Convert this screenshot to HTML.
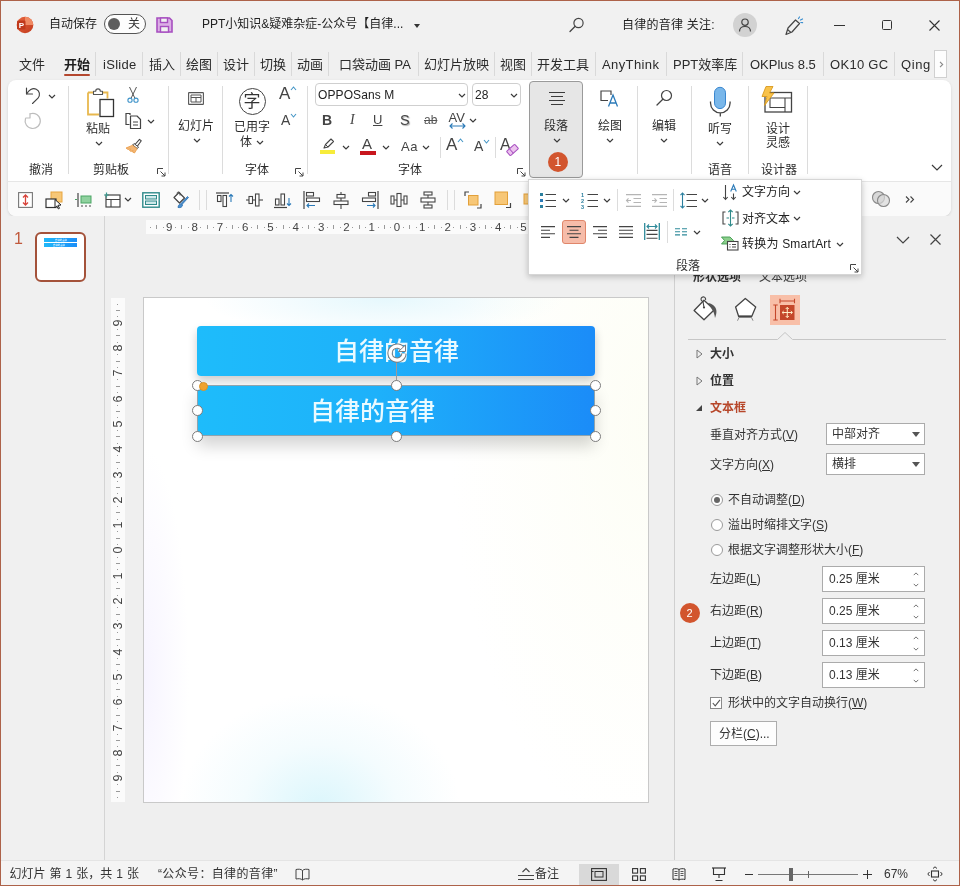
<!DOCTYPE html>
<html lang="zh-CN">
<head>
<meta charset="utf-8">
<title>PowerPoint</title>
<style>
*{box-sizing:border-box;margin:0;padding:0}
html,body{width:960px;height:886px;overflow:hidden}
body{font-family:"Liberation Sans","Noto Sans CJK SC",sans-serif;font-size:13px;color:#262626;background:#f0f0f0;position:relative}
.a{position:absolute}
.t{position:absolute;white-space:nowrap;line-height:1}
svg{position:absolute;overflow:visible}
#win{position:absolute;left:0;top:0;width:960px;height:886px;border:1px solid #ad6249;background:#f0f0f0}
/* title */
#title{left:1px;top:1px;width:958px;height:49px;background:#f1f1f1}
/* tabs */
.tab{font-size:13px;top:58px;color:#2b2b2b}
.tsep{position:absolute;top:52px;width:1px;height:24px;background:#d9d9d9}
/* ribbon */
#ribbon{left:8px;top:80px;width:943px;height:136px;background:#fff;border-radius:8px;box-shadow:0 1px 3px rgba(0,0,0,.12)}
.gsep{position:absolute;top:86px;width:1px;height:88px;background:#dcdcdc}
.glabel{font-size:13px;top:162px;color:#3a3a3a}
.rl{font-size:13px;color:#2b2b2b}
/* panes */
#leftpane{left:1px;top:216px;width:104px;height:644px;background:#f0f0f0;border-right:1px solid #d4d4d4}
#edit{left:105px;top:216px;width:570px;height:644px;background:#efefef}
#rightpane{left:674px;top:216px;width:285px;height:644px;background:#f0f0f0;border-left:1px solid #d0d0d0}
#status{left:1px;top:860px;width:958px;height:25px;background:#f4f4f4;border-top:1px solid #e4e4e4}
</style>
</head>
<body>
<div id="root" style="position:absolute;left:0;top:0;width:960px;height:886px;will-change:transform">
<div id="win"></div>
<div class="a" id="title"></div>
<div class="a" id="ribbon"><div class="a" style="left:0;top:101px;width:943px;height:35px;background:#fafafa;border-radius:0 0 8px 8px;border-top:1px solid #e6e6e6"></div></div>
<div class="a" id="leftpane"></div>
<div class="a" id="edit"></div>
<div class="a" id="rightpane"></div>
<div class="a" id="status"></div>
<!-- title bar -->
<svg style="left:16px;top:16px" width="18" height="18" viewBox="0 0 18 18"><defs><linearGradient id="pg" x1="0" y1="0" x2="1" y2="1"><stop offset="0" stop-color="#e8663f"/><stop offset="1" stop-color="#c23a1c"/></linearGradient></defs><circle cx="9" cy="9" r="8.3" fill="url(#pg)"/><path d="M9 .7A8.3 8.3 0 0 1 17.3 9H9z" fill="#f08a63"/><rect x="1" y="4.5" width="8.5" height="9" rx="1.2" fill="#c0391b"/><text x="5.3" y="12" font-size="8" font-weight="700" fill="#fff" text-anchor="middle" font-family="Liberation Sans, sans-serif">P</text></svg>
<div class="t" style="left:49px;top:18px;font-size:12px;color:#222">自动保存</div>
<div class="a" style="left:104px;top:14px;width:42px;height:20px;border:1px solid #555;border-radius:10px;background:#fdfdfd"></div>
<div class="a" style="left:108px;top:18px;width:12px;height:12px;border-radius:6px;background:#5e5e5e"></div>
<div class="t" style="left:128px;top:18px;font-size:12px;color:#333">关</div>
<svg style="left:156px;top:17px" width="17" height="16" viewBox="0 0 17 16"><path d="M1 1h12.5l2.5 2.5V15H1z" fill="#dcaee6" stroke="#a74fc0" stroke-width="1.6"/><rect x="4.5" y="1" width="7" height="4.5" fill="#f1f1f1" stroke="#a74fc0" stroke-width="1.4"/><rect x="4.5" y="9.5" width="8" height="5.5" fill="#f1f1f1" stroke="#a74fc0" stroke-width="1.4"/></svg>
<div class="t" style="left:202px;top:18px;font-size:12px;color:#222">PPT小知识&amp;疑难杂症-公众号【自律...</div>
<div class="a" style="left:414px;top:24px;width:0;height:0;border-left:3.5px solid transparent;border-right:3.5px solid transparent;border-top:4px solid #333"></div>
<svg style="left:569px;top:17px" width="16" height="16" viewBox="0 0 16 16"><circle cx="9.5" cy="6" r="4.6" fill="none" stroke="#444" stroke-width="1.2"/><path d="M6.2 9.3L1 14.5" stroke="#444" stroke-width="1.3" stroke-linecap="round"/></svg>
<div class="t" style="left:622px;top:19px;font-size:12px;color:#222;letter-spacing:.25px">自律的音律 关注:</div>
<div class="a" style="left:733px;top:13px;width:24px;height:24px;border-radius:12px;background:#d2d2d2"></div>
<svg style="left:737px;top:17px" width="16" height="16" viewBox="0 0 16 16"><circle cx="8" cy="5.2" r="3.2" fill="none" stroke="#444" stroke-width="1.2"/><path d="M2.5 14.5c0-3.2 2.4-5 5.5-5s5.500 1.800 5.500 5" fill="none" stroke="#444" stroke-width="1.200"/></svg>
<svg style="left:783px;top:15px" width="22" height="22" viewBox="0 0 22 22"><path d="M3 19.500l2-6.500 7.500-8 4 3.500-7.500 8.500z" fill="none" stroke="#444" stroke-width="1.200" stroke-linejoin="round"/><path d="M4.500 14.500l3.500 3" stroke="#444" stroke-width="1.100"/><path d="M15.500 3.500l1-1.500M17.500 5l2-1M17.800 7.500l1.800.2" stroke="#3a8ed0" stroke-width="1.200" stroke-linecap="round"/></svg>
<div class="a" style="left:834px;top:25px;width:11px;height:1px;background:#333"></div>
<div class="a" style="left:882px;top:20px;width:10px;height:10px;border:1px solid #333;border-radius:1.500px"></div>
<svg style="left:929px;top:20px" width="11" height="11" viewBox="0 0 11 11"><path d="M.5.5l10 10M10.500.5l-10 10" stroke="#333" stroke-width="1.100"/></svg>

<!-- tabs -->
<div class="t tab" style="left:19px">文件</div>
<div class="t tab" style="left:64px;font-weight:700;color:#1e1e1e">开始</div>
<div class="a" style="left:64px;top:74px;width:26px;height:2px;border-radius:1px;background:#b4472e"></div>
<div class="t tab" style="left:103px;letter-spacing:.3px">iSlide</div>
<div class="t tab" style="left:149px">插入</div>
<div class="t tab" style="left:186px">绘图</div>
<div class="t tab" style="left:223px">设计</div>
<div class="t tab" style="left:260px">切换</div>
<div class="t tab" style="left:297px">动画</div>
<div class="t tab" style="left:339px">口袋动画 PA</div>
<div class="t tab" style="left:424px">幻灯片放映</div>
<div class="t tab" style="left:500px">视图</div>
<div class="t tab" style="left:537px">开发工具</div>
<div class="t tab" style="left:602px;letter-spacing:.4px">AnyThink</div>
<div class="t tab" style="left:673px">PPT效率库</div>
<div class="t tab" style="left:750px">OKPlus 8.5</div>
<div class="t tab" style="left:830px;letter-spacing:.3px">OK10 GC</div>
<div class="t tab" style="left:901px;letter-spacing:.6px">Qing</div>
<div class="tsep" style="left:95px"></div><div class="tsep" style="left:142px"></div><div class="tsep" style="left:180px"></div><div class="tsep" style="left:217px"></div><div class="tsep" style="left:254px"></div><div class="tsep" style="left:291px"></div><div class="tsep" style="left:328px"></div><div class="tsep" style="left:418px"></div><div class="tsep" style="left:494px"></div><div class="tsep" style="left:531px"></div><div class="tsep" style="left:595px"></div><div class="tsep" style="left:666px"></div><div class="tsep" style="left:742px"></div><div class="tsep" style="left:823px"></div><div class="tsep" style="left:894px"></div>
<div class="a" style="left:934px;top:50px;width:13px;height:28px;background:#fdfdfd;border:1px solid #d0d0d0"></div>
<svg style="left:938.500px;top:60.500px" width="5" height="7" viewBox="0 0 5 7"><path d="M1 .8l2.700 2.700L1 6.200" fill="none" stroke="#888" stroke-width="1.100"/></svg>

<!-- ribbon group separators -->
<div class="gsep" style="left:68px"></div><div class="gsep" style="left:168px"></div><div class="gsep" style="left:222px"></div><div class="gsep" style="left:307px"></div><div class="gsep" style="left:637px"></div><div class="gsep" style="left:691px"></div><div class="gsep" style="left:748px"></div><div class="gsep" style="left:807px"></div>
<!-- undo group -->
<svg style="left:24px;top:85px" width="20" height="20" viewBox="0 0 20 20"><path d="M2.500 3v6h6" fill="none" stroke="#444" stroke-width="1.150" stroke-linecap="round" stroke-linejoin="round"/><path d="M2.800 8.800C4.500 5 8.500 2.500 12.300 4.200c3.400 1.600 4.200 5.800 1.700 9L8.500 18.500" fill="none" stroke="#444" stroke-width="1.150" stroke-linecap="round"/></svg>
<svg class="chev" style="left:48px;top:94px" width="8" height="5" viewBox="0 0 8 5"><path d="M1 1l3 3 3-3" fill="none" stroke="#3b3b3b" stroke-width="1.200"/></svg>
<svg style="left:24px;top:112px" width="18" height="18" viewBox="0 0 18 18"><path d="M6 1.500v4.500H1.800" fill="none" stroke="#bdbdbd" stroke-width="1.200" stroke-linecap="round" stroke-linejoin="round"/><path d="M6.300 1.700A7.600 7.600 0 1 1 1.500 6.500" fill="none" stroke="#bdbdbd" stroke-width="1.200" stroke-linecap="round"/></svg>
<div class="t rl" style="left:29px;top:163.500px;font-size:12px">撤消</div>
<!-- clipboard group -->
<svg style="left:86px;top:87px" width="30" height="32" viewBox="0 0 30 32"><path d="M2 5.500h5.500M17 5.500h4.500v6M2 5.500V27.500h11" fill="none" stroke="#e8b84e" stroke-width="1.800"/><path d="M7.500 7.500V4.200h2.200a2.300 2.300 0 0 1 4.600 0h2.200v3.300z" fill="#fff" stroke="#555" stroke-width="1.100" stroke-linejoin="round"/><rect x="14" y="12.500" width="13.500" height="17" fill="#fff" stroke="#333" stroke-width="1.300"/></svg>
<div class="t rl" style="left:86px;top:123px;font-size:12px">粘贴</div>
<svg style="left:95px;top:141px" width="8" height="5" viewBox="0 0 8 5"><path d="M1 1l3 3 3-3" fill="none" stroke="#3b3b3b" stroke-width="1.200"/></svg>
<svg style="left:126px;top:86px" width="14" height="18" viewBox="0 0 14 18"><path d="M3.500 1l5.300 11M10.500 1L5.200 12" stroke="#555" stroke-width="1" fill="none"/><circle cx="4" cy="14.200" r="2.100" fill="none" stroke="#3e93c9" stroke-width="1.100"/><circle cx="10" cy="14.200" r="2.100" fill="none" stroke="#3e93c9" stroke-width="1.100"/></svg>
<svg style="left:125px;top:112px" width="18" height="18" viewBox="0 0 18 18"><path d="M5 3V1.500H1v11h3.500" fill="none" stroke="#444" stroke-width="1.200"/><path d="M5.500 4h6.500l3.500 3.500V16.500h-10z" fill="#fff" stroke="#444" stroke-width="1.200" stroke-linejoin="round"/><path d="M8 10h5M8 13h5" stroke="#444" stroke-width="1.100"/></svg>
<svg style="left:147px;top:119px" width="8" height="5" viewBox="0 0 8 5"><path d="M1 1l3 3 3-3" fill="none" stroke="#3b3b3b" stroke-width="1.200"/></svg>
<svg style="left:125px;top:138px" width="18" height="16" viewBox="0 0 18 16"><path d="M10 6.500l4.500-5.200 1.800 1.500-4 5.500" fill="#fff" stroke="#444" stroke-width="1.100" stroke-linejoin="round"/><path d="M9 5.500l4.500 3.500-1.200 1.600L7.700 7z" fill="#fff" stroke="#444" stroke-width="1"/><path d="M7.500 7.300l4.600 3.500-2.600 4.200-2-1 .5-1.500-2 1-1.500-1 1-1.500-2.500.5L1 10z" fill="#f3b675" stroke="#e89a45" stroke-width=".8" stroke-linejoin="round"/></svg>
<div class="t rl" style="left:93px;top:163.500px;font-size:12px">剪贴板</div>
<svg class="lnch" style="left:157px;top:168px" width="9" height="9" viewBox="0 0 9 9"><path d="M.5 6V.5H6M3.500 3.500L8 8M8 4.500V8H4.500" fill="none" stroke="#444" stroke-width="1"/></svg>
<!-- slides group -->
<svg style="left:188px;top:92px" width="16" height="13" viewBox="0 0 16 13"><rect x=".6" y=".6" width="14.800" height="11.800" rx=".5" fill="none" stroke="#555" stroke-width="1.100"/><path d="M3 3h10v7H3zM3 5.500h10M8 5.500v4.500" fill="none" stroke="#555" stroke-width="1"/></svg>
<div class="t rl" style="left:178px;top:120px;font-size:12px">幻灯片</div>
<svg style="left:193px;top:138px" width="8" height="5" viewBox="0 0 8 5"><path d="M1 1l3 3 3-3" fill="none" stroke="#3b3b3b" stroke-width="1.200"/></svg>
<!-- font group 1 -->
<div class="a" style="left:238.500px;top:88px;width:27px;height:27px;border:1.200px solid #444;border-radius:14px"></div>
<div class="t" style="left:243.500px;top:93px;font-size:17px;color:#333">字</div>
<div class="t rl" style="left:234px;top:121px;font-size:12px">已用字</div>
<div class="t rl" style="left:240px;top:136px;font-size:12px">体</div>
<svg style="left:256px;top:140px" width="8" height="5" viewBox="0 0 8 5"><path d="M1 1l3 3 3-3" fill="none" stroke="#3b3b3b" stroke-width="1.200"/></svg>
<div class="t" style="left:279px;top:85px;font-size:17px;color:#444">A</div>
<svg style="left:290px;top:86px" width="7" height="5" viewBox="0 0 7 5"><path d="M1 4l2.500-3L6 4" fill="none" stroke="#4596c6" stroke-width="1.100"/></svg>
<div class="t" style="left:281px;top:113px;font-size:14px;color:#444">A</div>
<svg style="left:290px;top:113px" width="7" height="5" viewBox="0 0 7 5"><path d="M1 1l2.500 3L6 1" fill="none" stroke="#4596c6" stroke-width="1.100"/></svg>
<div class="t rl" style="left:245px;top:163.500px;font-size:12px">字体</div>
<svg style="left:295px;top:168px" width="9" height="9" viewBox="0 0 9 9"><path d="M.5 6V.5H6M3.500 3.500L8 8M8 4.500V8H4.500" fill="none" stroke="#444" stroke-width="1"/></svg>
<!-- font group 2 -->
<div class="a" style="left:315px;top:83px;width:153px;height:23px;border:1px solid #cfcfcf;border-radius:4px;background:#fff"></div>
<div class="t" style="left:318px;top:89px;font-size:12px;color:#222;letter-spacing:.1px">OPPOSans M</div>
<svg style="left:458px;top:93px" width="8" height="5" viewBox="0 0 8 5"><path d="M1 1l3 3 3-3" fill="none" stroke="#3b3b3b" stroke-width="1.200"/></svg>
<div class="a" style="left:472px;top:83px;width:49px;height:23px;border:1px solid #cfcfcf;border-radius:4px;background:#fff"></div>
<div class="t" style="left:475px;top:89px;font-size:12px;color:#222">28</div>
<svg style="left:510px;top:93px" width="8" height="5" viewBox="0 0 8 5"><path d="M1 1l3 3 3-3" fill="none" stroke="#3b3b3b" stroke-width="1.200"/></svg>
<div class="t" style="left:322px;top:113px;font-size:14px;font-weight:700;color:#444">B</div>
<div class="t" style="left:350px;top:113px;font-size:14px;font-style:italic;color:#444;font-family:'Liberation Serif',serif">I</div>
<div class="t" style="left:373px;top:113px;font-size:13px;color:#444;text-decoration:underline">U</div>
<div class="t" style="left:400px;top:113px;font-size:14.500px;color:#444;text-shadow:1px 1px 1px #aaa">S</div>
<div class="t" style="left:424px;top:114px;font-size:12px;color:#555;text-decoration:line-through">ab</div>
<div class="t" style="left:448.500px;top:110.500px;font-size:13px;color:#444">AV</div>
<svg style="left:449px;top:123px" width="17" height="6" viewBox="0 0 17 6"><path d="M1 3h15M3.500.5L1 3l2.500 2.500M13.500.5L16 3l-2.500 2.500" fill="none" stroke="#2b7ab8" stroke-width="1.100"/></svg>
<svg style="left:469px;top:118px" width="8" height="5" viewBox="0 0 8 5"><path d="M1 1l3 3 3-3" fill="none" stroke="#3b3b3b" stroke-width="1.200"/></svg>
<!-- row3 -->
<svg style="left:319px;top:137px" width="18" height="18" viewBox="0 0 18 18"><rect x="1" y="13" width="15" height="4" fill="#f7ec3a"/><path d="M5 11l1.500-3.500L12 2l2.500 2.500L9 10z" fill="#fff" stroke="#444" stroke-width="1.100" stroke-linejoin="round"/><path d="M6.500 7.500L9 10" stroke="#444" stroke-width="1"/></svg>
<svg style="left:342px;top:145px" width="8" height="5" viewBox="0 0 8 5"><path d="M1 1l3 3 3-3" fill="none" stroke="#3b3b3b" stroke-width="1.200"/></svg>
<div class="t" style="left:362px;top:136px;font-size:15px;color:#444">A</div>
<div class="a" style="left:360px;top:151px;width:16px;height:4px;background:#c8161d"></div>
<svg style="left:382px;top:145px" width="8" height="5" viewBox="0 0 8 5"><path d="M1 1l3 3 3-3" fill="none" stroke="#3b3b3b" stroke-width="1.200"/></svg>
<div class="t" style="left:401px;top:140px;font-size:13px;color:#444;letter-spacing:.5px">Aa</div>
<svg style="left:422px;top:145px" width="8" height="5" viewBox="0 0 8 5"><path d="M1 1l3 3 3-3" fill="none" stroke="#3b3b3b" stroke-width="1.200"/></svg>
<div class="a" style="left:440px;top:137px;width:1px;height:21px;background:#dcdcdc"></div>
<div class="t" style="left:446px;top:136px;font-size:17px;color:#444">A</div>
<svg style="left:457px;top:138px" width="7" height="5" viewBox="0 0 7 5"><path d="M1 4l2.500-3L6 4" fill="none" stroke="#4596c6" stroke-width="1.100"/></svg>
<div class="t" style="left:474px;top:139px;font-size:14px;color:#444">A</div>
<svg style="left:483px;top:139px" width="7" height="5" viewBox="0 0 7 5"><path d="M1 1l2.500 3L6 1" fill="none" stroke="#4596c6" stroke-width="1.100"/></svg>
<div class="a" style="left:495px;top:137px;width:1px;height:21px;background:#dcdcdc"></div>
<div class="t" style="left:500px;top:137px;font-size:16px;color:#444">A</div>
<svg style="left:506px;top:144px" width="13" height="12" viewBox="0 0 13 12"><g transform="rotate(-42 6.500 6)"><rect x="1" y="3" width="11" height="6" rx="1" fill="#ecc3ee" stroke="#a74fc0" stroke-width="1"/><path d="M5 3v6" stroke="#a74fc0" stroke-width="1"/></g></svg>
<div class="t rl" style="left:398px;top:163.500px;font-size:12px">字体</div>
<svg style="left:517px;top:168px" width="9" height="9" viewBox="0 0 9 9"><path d="M.5 6V.5H6M3.500 3.500L8 8M8 4.500V8H4.500" fill="none" stroke="#444" stroke-width="1"/></svg>
<!-- paragraph button -->
<div class="a" style="left:529px;top:81px;width:54px;height:97px;border:1px solid #9a9a9a;border-radius:4px;background:#e6e6e6"></div>
<svg style="left:549px;top:92px" width="16" height="13" viewBox="0 0 16 13"><path d="M0 .5h16M2 4.500h12M0 8.500h16M2 12.500h12" stroke="#3c3c3c" stroke-width="1"/></svg>
<div class="t rl" style="left:544px;top:120px;font-size:12px">段落</div>
<svg style="left:553px;top:138px" width="8" height="5" viewBox="0 0 8 5"><path d="M1 1l3 3 3-3" fill="none" stroke="#3b3b3b" stroke-width="1.200"/></svg>
<div class="a" style="left:548px;top:152px;width:20px;height:20px;border-radius:10px;background:#d2552e"></div>
<div class="t" style="left:554.500px;top:156px;font-size:12px;color:#fff">1</div>
<!-- drawing -->
<svg style="left:600px;top:90px" width="20" height="18" viewBox="0 0 20 18"><path d="M8 10.500H1V1h10v4" fill="none" stroke="#444" stroke-width="1.200"/><path d="M8.500 16.500L13 5l4.500 11.500M10 13h6" fill="none" stroke="#2b7ab8" stroke-width="1.300"/></svg>
<div class="t rl" style="left:598px;top:120px;font-size:12px">绘图</div>
<svg style="left:606px;top:138px" width="8" height="5" viewBox="0 0 8 5"><path d="M1 1l3 3 3-3" fill="none" stroke="#3b3b3b" stroke-width="1.200"/></svg>
<!-- editing -->
<svg style="left:656px;top:89px" width="17" height="17" viewBox="0 0 17 17"><circle cx="10.500" cy="6.500" r="5" fill="none" stroke="#444" stroke-width="1.200"/><path d="M6.800 10.200L1 16" stroke="#444" stroke-width="1.300" stroke-linecap="round"/></svg>
<div class="t rl" style="left:652px;top:120px;font-size:12px">编辑</div>
<svg style="left:660px;top:138px" width="8" height="5" viewBox="0 0 8 5"><path d="M1 1l3 3 3-3" fill="none" stroke="#3b3b3b" stroke-width="1.200"/></svg>
<!-- dictate -->
<svg style="left:709px;top:86px" width="23" height="32" viewBox="0 0 23 32"><rect x="5.500" y="1.300" width="11" height="21.300" rx="5.500" fill="#79b7ea" stroke="#3a87cf" stroke-width="1"/><path d="M1.500 15.500v1.500a9.800 9.800 0 0 0 19.600 0v-1.500M11.300 27v3.500" fill="none" stroke="#444" stroke-width="1.300"/></svg>
<div class="t rl" style="left:708px;top:123px;font-size:12px">听写</div>
<svg style="left:716px;top:141px" width="8" height="5" viewBox="0 0 8 5"><path d="M1 1l3 3 3-3" fill="none" stroke="#3b3b3b" stroke-width="1.200"/></svg>
<div class="t rl" style="left:708px;top:163.500px;font-size:12px">语音</div>
<!-- designer -->
<svg style="left:760px;top:85px" width="33" height="29" viewBox="0 0 33 29"><rect x="5" y="7.500" width="26.500" height="19.500" fill="#fff" stroke="#444" stroke-width="1.300"/><path d="M10 13h21M25 13v14M10 13v9.500h15" fill="none" stroke="#444" stroke-width="1.100"/><path d="M6 1.500h7l-3.500 6.500h4.500L4.500 20.500 7 11.500H2z" fill="#f8c24a" stroke="#d99a1e" stroke-width=".9" stroke-linejoin="round"/></svg>
<div class="t rl" style="left:766px;top:123px;font-size:12px">设计</div>
<div class="t rl" style="left:766px;top:137px;font-size:12px">灵感</div>
<div class="t rl" style="left:761px;top:163.500px;font-size:12px">设计器</div>
<svg style="left:931px;top:164px" width="12" height="7" viewBox="0 0 12 7"><path d="M1 1l5 5 5-5" fill="none" stroke="#3b3b3b" stroke-width="1.200"/></svg>

<!-- quick toolbar row -->
<svg style="left:18px;top:192px" width="15" height="16" viewBox="0 0 15 16"><rect x=".6" y=".6" width="13.800" height="14.800" fill="#fff" stroke="#777" stroke-width="1.100"/><path d="M7.500 3v10M5 5.500L7.500 3 10 5.500M5 10.500L7.500 13 10 10.500" fill="none" stroke="#d8433a" stroke-width="1.300"/></svg>
<svg style="left:45px;top:191px" width="18" height="18" viewBox="0 0 18 18"><rect x="6" y="1" width="11" height="10" fill="#f7c777" stroke="#e7a540" stroke-width="1"/><rect x="1" y="8" width="10" height="8.500" fill="#fff" stroke="#333" stroke-width="1.200"/><path d="M10 8.500l6 5.500-3 .3 1.500 3-1.200.6-1.500-3-1.800 2z" fill="#fff" stroke="#222" stroke-width="1" stroke-linejoin="round"/></svg>
<svg style="left:74px;top:192px" width="19" height="16" viewBox="0 0 19 16"><rect x="7" y="4" width="10" height="7" fill="#8fd19e" stroke="#4aa564" stroke-width="1"/><path d="M4 1v14" stroke="#444" stroke-width="1.200"/><path d="M1 7.500h2" stroke="#4aa564" stroke-width="1.200"/><path d="M7 14h2M11 14h2M15 14h2" stroke="#444" stroke-width="1.200"/></svg>
<svg style="left:103px;top:192px" width="18" height="16" viewBox="0 0 18 16"><rect x="3" y="3" width="14" height="12" fill="#fff" stroke="#444" stroke-width="1.200"/><path d="M3 7.500h14M8 7.500V15" stroke="#444" stroke-width="1.100"/><path d="M1 3h5M3.500.5v5" stroke="#3a9a8f" stroke-width="1.200"/></svg>
<svg style="left:124px;top:197px" width="8" height="5" viewBox="0 0 8 5"><path d="M1 1l3 3 3-3" fill="none" stroke="#3b3b3b" stroke-width="1.200"/></svg>
<svg style="left:142px;top:192px" width="18" height="16" viewBox="0 0 18 16"><rect x=".8" y=".8" width="16.400" height="14.400" fill="#fff" stroke="#2f8a8a" stroke-width="1.400"/><rect x="3.500" y="3.500" width="11" height="3.500" fill="#cfe9ea" stroke="#2f8a8a" stroke-width="1"/><rect x="3.500" y="9" width="11" height="3.500" fill="#cfe9ea" stroke="#2f8a8a" stroke-width="1"/></svg>
<svg style="left:172px;top:191px" width="18" height="18" viewBox="0 0 18 18"><path d="M2 6.500L7 1.500l5.500 5.500-5 5z" fill="#fff" stroke="#444" stroke-width="1.200" stroke-linejoin="round"/><path d="M5 2.500c0-2 3-2 3 0v2" fill="none" stroke="#444" stroke-width="1"/><path d="M16.500 6.500L10 13.500l-1-1 6.500-7z" fill="#4a90d0" stroke="#2b6fb0" stroke-width=".8"/><path d="M9.500 13c-1.500-.5-3.500 1-3.500 3.500 2.500.5 4.500-.5 4.500-2.500z" fill="#4a90d0" stroke="#2b6fb0" stroke-width=".8"/></svg>
<div class="a" style="left:199px;top:190px;width:1px;height:20px;background:#dcdcdc"></div>
<div class="a" style="left:206px;top:190px;width:1px;height:20px;background:#dcdcdc"></div>
<svg style="left:216px;top:192px" width="18" height="16" viewBox="0 0 18 16"><path d="M0 1h13" stroke="#444" stroke-width="1.200"/><rect x="1.500" y="3.500" width="3.500" height="6" fill="#fff" stroke="#444" stroke-width="1.100"/><rect x="7" y="3.500" width="3.500" height="11" fill="#fff" stroke="#444" stroke-width="1.100"/><path d="M15 10V2.500M13 4.500l2-2 2 2" fill="none" stroke="#2b7ab8" stroke-width="1.100"/></svg>
<svg style="left:246px;top:192px" width="17" height="16" viewBox="0 0 17 16"><path d="M0 8h17" stroke="#444" stroke-width="1.100"/><rect x="3" y="4.500" width="3.500" height="7" fill="#fff" stroke="#444" stroke-width="1.100"/><rect x="9.500" y="2" width="3.500" height="12" fill="#fff" stroke="#444" stroke-width="1.100"/></svg>
<svg style="left:274px;top:192px" width="18" height="17" viewBox="0 0 18 17"><path d="M0 15.500h13" stroke="#444" stroke-width="1.200"/><rect x="1.500" y="7" width="3.500" height="6" fill="#fff" stroke="#444" stroke-width="1.100"/><rect x="7" y="2" width="3.500" height="11" fill="#fff" stroke="#444" stroke-width="1.100"/><path d="M15 6v7.500M13 11.500l2 2 2-2" fill="none" stroke="#2b7ab8" stroke-width="1.100"/></svg>
<svg style="left:303px;top:191px" width="18" height="18" viewBox="0 0 18 18"><path d="M1 0v18" stroke="#444" stroke-width="1.200"/><rect x="3.500" y="1.500" width="7" height="3.500" fill="#fff" stroke="#444" stroke-width="1.100"/><rect x="3.500" y="7" width="13" height="3.500" fill="#fff" stroke="#444" stroke-width="1.100"/><path d="M12 14.500H4M6 12.500l-2 2 2 2" fill="none" stroke="#2b7ab8" stroke-width="1.100"/></svg>
<svg style="left:333px;top:192px" width="16" height="17" viewBox="0 0 16 17"><path d="M8 0v17" stroke="#444" stroke-width="1.100"/><rect x="4" y="2.500" width="8" height="3.500" fill="#fff" stroke="#444" stroke-width="1.100"/><rect x="1" y="9" width="14" height="3.500" fill="#fff" stroke="#444" stroke-width="1.100"/></svg>
<svg style="left:361px;top:191px" width="18" height="18" viewBox="0 0 18 18"><path d="M17 0v18" stroke="#444" stroke-width="1.200"/><rect x="7.500" y="1.500" width="7" height="3.500" fill="#fff" stroke="#444" stroke-width="1.100"/><rect x="1.500" y="7" width="13" height="3.500" fill="#fff" stroke="#444" stroke-width="1.100"/><path d="M6 14.500h8M12 12.500l2 2-2 2" fill="none" stroke="#2b7ab8" stroke-width="1.100"/></svg>
<svg style="left:390px;top:192px" width="18" height="16" viewBox="0 0 18 16"><rect x="1" y="4" width="3" height="8" fill="#fff" stroke="#444" stroke-width="1.100"/><rect x="7" y="1.500" width="4" height="13" fill="#fff" stroke="#444" stroke-width="1.100"/><rect x="14" y="4" width="3" height="8" fill="#fff" stroke="#444" stroke-width="1.100"/><path d="M4 8h3M11 8h3" stroke="#444" stroke-width="1"/></svg>
<svg style="left:420px;top:191px" width="16" height="18" viewBox="0 0 16 18"><rect x="4" y="1" width="8" height="3" fill="#fff" stroke="#444" stroke-width="1.100"/><rect x="1" y="7" width="14" height="4" fill="#fff" stroke="#444" stroke-width="1.100"/><rect x="4" y="14" width="8" height="3" fill="#fff" stroke="#444" stroke-width="1.100"/><path d="M8 4v3M8 11v3" stroke="#444" stroke-width="1"/></svg>
<div class="a" style="left:447px;top:190px;width:1px;height:20px;background:#dcdcdc"></div>
<div class="a" style="left:454px;top:190px;width:1px;height:20px;background:#dcdcdc"></div>
<svg style="left:464px;top:191px" width="18" height="18" viewBox="0 0 18 18"><path d="M5 1H1v4M13 17h4v-4" fill="none" stroke="#444" stroke-width="1.200"/><rect x="4.500" y="4.500" width="9.500" height="9.500" fill="#f7c777" stroke="#e2a03a" stroke-width="1"/></svg>
<svg style="left:494px;top:191px" width="18" height="18" viewBox="0 0 18 18"><path d="M12 16.500h4.500V12" fill="none" stroke="#444" stroke-width="1.200"/><rect x="1" y="1" width="12.500" height="12.500" fill="#f7c777" stroke="#e2a03a" stroke-width="1"/></svg>
<svg style="left:523px;top:191px" width="8" height="18" viewBox="0 0 8 18"><rect x="1" y="3" width="10" height="10" fill="#f7c777" stroke="#e2a03a" stroke-width="1"/></svg>
<svg style="left:871px;top:190px" width="20" height="18" viewBox="0 0 20 18"><circle cx="7.500" cy="7.500" r="6" fill="#d8d8d8" stroke="#888" stroke-width="1.100"/><circle cx="12.500" cy="10.500" r="6" fill="#d8d8d8" fill-opacity=".7" stroke="#888" stroke-width="1.100"/></svg>
<svg style="left:905px;top:196px" width="10" height="7" viewBox="0 0 10 7"><path d="M1 .5l3 3-3 3M5.500.5l3 3-3 3" fill="none" stroke="#444" stroke-width="1.100"/></svg>


<div class="t" style="left:14px;top:231px;font-size:16px;color:#c0593c">1</div>
<div class="a" style="left:35px;top:232px;width:51px;height:50px;border:2.500px solid #a4523a;border-radius:6px;background:#fff;overflow:hidden"><div class="a" style="left:6.500px;top:3.500px;width:33.500px;height:4.600px;background:linear-gradient(90deg,#1fb8f9,#1b8ef8)"></div><div class="a" style="left:6.500px;top:8.500px;width:33.500px;height:4.600px;background:linear-gradient(90deg,#1fb8f9,#1b8ef8)"></div><div class="t" style="left:18px;top:4.500px;font-size:12px;color:#fff;transform:scale(.2);transform-origin:0 0">自律的音律</div><div class="t" style="left:16px;top:9.500px;font-size:12px;color:#fff;transform:scale(.2);transform-origin:0 0">自律的音律</div></div>
<div class="a" style="left:146px;top:220px;width:503px;height:14px;background:#fbfbfb"></div>
<div class="t" style="left:164.3px;top:221.500px;width:10px;text-align:center;font-size:11.500px;color:#444">9</div>
<div class="t" style="left:189.6px;top:221.500px;width:10px;text-align:center;font-size:11.500px;color:#444">8</div>
<div class="t" style="left:214.9px;top:221.500px;width:10px;text-align:center;font-size:11.500px;color:#444">7</div>
<div class="t" style="left:240.2px;top:221.500px;width:10px;text-align:center;font-size:11.500px;color:#444">6</div>
<div class="t" style="left:265.5px;top:221.500px;width:10px;text-align:center;font-size:11.500px;color:#444">5</div>
<div class="t" style="left:290.8px;top:221.500px;width:10px;text-align:center;font-size:11.500px;color:#444">4</div>
<div class="t" style="left:316.1px;top:221.500px;width:10px;text-align:center;font-size:11.500px;color:#444">3</div>
<div class="t" style="left:341.4px;top:221.500px;width:10px;text-align:center;font-size:11.500px;color:#444">2</div>
<div class="t" style="left:366.7px;top:221.500px;width:10px;text-align:center;font-size:11.500px;color:#444">1</div>
<div class="t" style="left:392.0px;top:221.500px;width:10px;text-align:center;font-size:11.500px;color:#444">0</div>
<div class="t" style="left:417.3px;top:221.500px;width:10px;text-align:center;font-size:11.500px;color:#444">1</div>
<div class="t" style="left:442.6px;top:221.500px;width:10px;text-align:center;font-size:11.500px;color:#444">2</div>
<div class="t" style="left:467.9px;top:221.500px;width:10px;text-align:center;font-size:11.500px;color:#444">3</div>
<div class="t" style="left:493.2px;top:221.500px;width:10px;text-align:center;font-size:11.500px;color:#444">4</div>
<div class="t" style="left:518.5px;top:221.500px;width:10px;text-align:center;font-size:11.500px;color:#444">5</div>
<div class="a" style="left:149.8px;top:226.500px;width:1px;height:1px;background:#9a9a9a"></div>
<div class="a" style="left:156.2px;top:225px;width:1px;height:4px;background:#9a9a9a"></div>
<div class="a" style="left:162.5px;top:226.500px;width:1px;height:1px;background:#9a9a9a"></div>
<div class="a" style="left:175.1px;top:226.500px;width:1px;height:1px;background:#9a9a9a"></div>
<div class="a" style="left:181.4px;top:225px;width:1px;height:4px;background:#9a9a9a"></div>
<div class="a" style="left:187.8px;top:226.500px;width:1px;height:1px;background:#9a9a9a"></div>
<div class="a" style="left:200.4px;top:226.500px;width:1px;height:1px;background:#9a9a9a"></div>
<div class="a" style="left:206.8px;top:225px;width:1px;height:4px;background:#9a9a9a"></div>
<div class="a" style="left:213.1px;top:226.500px;width:1px;height:1px;background:#9a9a9a"></div>
<div class="a" style="left:225.7px;top:226.500px;width:1px;height:1px;background:#9a9a9a"></div>
<div class="a" style="left:232.0px;top:225px;width:1px;height:4px;background:#9a9a9a"></div>
<div class="a" style="left:238.4px;top:226.500px;width:1px;height:1px;background:#9a9a9a"></div>
<div class="a" style="left:251.0px;top:226.500px;width:1px;height:1px;background:#9a9a9a"></div>
<div class="a" style="left:257.4px;top:225px;width:1px;height:4px;background:#9a9a9a"></div>
<div class="a" style="left:263.7px;top:226.500px;width:1px;height:1px;background:#9a9a9a"></div>
<div class="a" style="left:276.3px;top:226.500px;width:1px;height:1px;background:#9a9a9a"></div>
<div class="a" style="left:282.6px;top:225px;width:1px;height:4px;background:#9a9a9a"></div>
<div class="a" style="left:289.0px;top:226.500px;width:1px;height:1px;background:#9a9a9a"></div>
<div class="a" style="left:301.6px;top:226.500px;width:1px;height:1px;background:#9a9a9a"></div>
<div class="a" style="left:307.9px;top:225px;width:1px;height:4px;background:#9a9a9a"></div>
<div class="a" style="left:314.3px;top:226.500px;width:1px;height:1px;background:#9a9a9a"></div>
<div class="a" style="left:326.9px;top:226.500px;width:1px;height:1px;background:#9a9a9a"></div>
<div class="a" style="left:333.2px;top:225px;width:1px;height:4px;background:#9a9a9a"></div>
<div class="a" style="left:339.6px;top:226.500px;width:1px;height:1px;background:#9a9a9a"></div>
<div class="a" style="left:352.2px;top:226.500px;width:1px;height:1px;background:#9a9a9a"></div>
<div class="a" style="left:358.6px;top:225px;width:1px;height:4px;background:#9a9a9a"></div>
<div class="a" style="left:364.9px;top:226.500px;width:1px;height:1px;background:#9a9a9a"></div>
<div class="a" style="left:377.5px;top:226.500px;width:1px;height:1px;background:#9a9a9a"></div>
<div class="a" style="left:383.9px;top:225px;width:1px;height:4px;background:#9a9a9a"></div>
<div class="a" style="left:390.2px;top:226.500px;width:1px;height:1px;background:#9a9a9a"></div>
<div class="a" style="left:402.8px;top:226.500px;width:1px;height:1px;background:#9a9a9a"></div>
<div class="a" style="left:409.1px;top:225px;width:1px;height:4px;background:#9a9a9a"></div>
<div class="a" style="left:415.5px;top:226.500px;width:1px;height:1px;background:#9a9a9a"></div>
<div class="a" style="left:428.1px;top:226.500px;width:1px;height:1px;background:#9a9a9a"></div>
<div class="a" style="left:434.4px;top:225px;width:1px;height:4px;background:#9a9a9a"></div>
<div class="a" style="left:440.8px;top:226.500px;width:1px;height:1px;background:#9a9a9a"></div>
<div class="a" style="left:453.4px;top:226.500px;width:1px;height:1px;background:#9a9a9a"></div>
<div class="a" style="left:459.8px;top:225px;width:1px;height:4px;background:#9a9a9a"></div>
<div class="a" style="left:466.1px;top:226.500px;width:1px;height:1px;background:#9a9a9a"></div>
<div class="a" style="left:478.7px;top:226.500px;width:1px;height:1px;background:#9a9a9a"></div>
<div class="a" style="left:485.1px;top:225px;width:1px;height:4px;background:#9a9a9a"></div>
<div class="a" style="left:491.4px;top:226.500px;width:1px;height:1px;background:#9a9a9a"></div>
<div class="a" style="left:504.0px;top:226.500px;width:1px;height:1px;background:#9a9a9a"></div>
<div class="a" style="left:510.4px;top:225px;width:1px;height:4px;background:#9a9a9a"></div>
<div class="a" style="left:516.7px;top:226.500px;width:1px;height:1px;background:#9a9a9a"></div>
<div class="a" style="left:529.3px;top:226.500px;width:1px;height:1px;background:#9a9a9a"></div>
<div class="a" style="left:111px;top:298px;width:14px;height:504px;background:#fbfbfb"></div>
<div class="t" style="left:112px;top:317.7px;width:10px;height:10px;text-align:center;font-size:12.500px;color:#444;transform:rotate(-90deg)">9</div>
<div class="t" style="left:112px;top:343.0px;width:10px;height:10px;text-align:center;font-size:12.500px;color:#444;transform:rotate(-90deg)">8</div>
<div class="t" style="left:112px;top:368.3px;width:10px;height:10px;text-align:center;font-size:12.500px;color:#444;transform:rotate(-90deg)">7</div>
<div class="t" style="left:112px;top:393.6px;width:10px;height:10px;text-align:center;font-size:12.500px;color:#444;transform:rotate(-90deg)">6</div>
<div class="t" style="left:112px;top:418.9px;width:10px;height:10px;text-align:center;font-size:12.500px;color:#444;transform:rotate(-90deg)">5</div>
<div class="t" style="left:112px;top:444.2px;width:10px;height:10px;text-align:center;font-size:12.500px;color:#444;transform:rotate(-90deg)">4</div>
<div class="t" style="left:112px;top:469.5px;width:10px;height:10px;text-align:center;font-size:12.500px;color:#444;transform:rotate(-90deg)">3</div>
<div class="t" style="left:112px;top:494.8px;width:10px;height:10px;text-align:center;font-size:12.500px;color:#444;transform:rotate(-90deg)">2</div>
<div class="t" style="left:112px;top:520.1px;width:10px;height:10px;text-align:center;font-size:12.500px;color:#444;transform:rotate(-90deg)">1</div>
<div class="t" style="left:112px;top:545.4px;width:10px;height:10px;text-align:center;font-size:12.500px;color:#444;transform:rotate(-90deg)">0</div>
<div class="t" style="left:112px;top:570.7px;width:10px;height:10px;text-align:center;font-size:12.500px;color:#444;transform:rotate(-90deg)">1</div>
<div class="t" style="left:112px;top:596.0px;width:10px;height:10px;text-align:center;font-size:12.500px;color:#444;transform:rotate(-90deg)">2</div>
<div class="t" style="left:112px;top:621.3px;width:10px;height:10px;text-align:center;font-size:12.500px;color:#444;transform:rotate(-90deg)">3</div>
<div class="t" style="left:112px;top:646.6px;width:10px;height:10px;text-align:center;font-size:12.500px;color:#444;transform:rotate(-90deg)">4</div>
<div class="t" style="left:112px;top:671.9px;width:10px;height:10px;text-align:center;font-size:12.500px;color:#444;transform:rotate(-90deg)">5</div>
<div class="t" style="left:112px;top:697.2px;width:10px;height:10px;text-align:center;font-size:12.500px;color:#444;transform:rotate(-90deg)">6</div>
<div class="t" style="left:112px;top:722.5px;width:10px;height:10px;text-align:center;font-size:12.500px;color:#444;transform:rotate(-90deg)">7</div>
<div class="t" style="left:112px;top:747.8px;width:10px;height:10px;text-align:center;font-size:12.500px;color:#444;transform:rotate(-90deg)">8</div>
<div class="t" style="left:112px;top:773.1px;width:10px;height:10px;text-align:center;font-size:12.500px;color:#444;transform:rotate(-90deg)">9</div>
<div class="a" style="left:117px;top:303.5px;width:1px;height:1px;background:#9a9a9a"></div>
<div class="a" style="left:115.500px;top:309.9px;width:4px;height:1px;background:#9a9a9a"></div>
<div class="a" style="left:117px;top:316.2px;width:1px;height:1px;background:#9a9a9a"></div>
<div class="a" style="left:117px;top:328.8px;width:1px;height:1px;background:#9a9a9a"></div>
<div class="a" style="left:115.500px;top:335.2px;width:4px;height:1px;background:#9a9a9a"></div>
<div class="a" style="left:117px;top:341.5px;width:1px;height:1px;background:#9a9a9a"></div>
<div class="a" style="left:117px;top:354.1px;width:1px;height:1px;background:#9a9a9a"></div>
<div class="a" style="left:115.500px;top:360.5px;width:4px;height:1px;background:#9a9a9a"></div>
<div class="a" style="left:117px;top:366.8px;width:1px;height:1px;background:#9a9a9a"></div>
<div class="a" style="left:117px;top:379.4px;width:1px;height:1px;background:#9a9a9a"></div>
<div class="a" style="left:115.500px;top:385.8px;width:4px;height:1px;background:#9a9a9a"></div>
<div class="a" style="left:117px;top:392.1px;width:1px;height:1px;background:#9a9a9a"></div>
<div class="a" style="left:117px;top:404.7px;width:1px;height:1px;background:#9a9a9a"></div>
<div class="a" style="left:115.500px;top:411.1px;width:4px;height:1px;background:#9a9a9a"></div>
<div class="a" style="left:117px;top:417.4px;width:1px;height:1px;background:#9a9a9a"></div>
<div class="a" style="left:117px;top:430.0px;width:1px;height:1px;background:#9a9a9a"></div>
<div class="a" style="left:115.500px;top:436.4px;width:4px;height:1px;background:#9a9a9a"></div>
<div class="a" style="left:117px;top:442.7px;width:1px;height:1px;background:#9a9a9a"></div>
<div class="a" style="left:117px;top:455.3px;width:1px;height:1px;background:#9a9a9a"></div>
<div class="a" style="left:115.500px;top:461.7px;width:4px;height:1px;background:#9a9a9a"></div>
<div class="a" style="left:117px;top:468.0px;width:1px;height:1px;background:#9a9a9a"></div>
<div class="a" style="left:117px;top:480.6px;width:1px;height:1px;background:#9a9a9a"></div>
<div class="a" style="left:115.500px;top:487.0px;width:4px;height:1px;background:#9a9a9a"></div>
<div class="a" style="left:117px;top:493.3px;width:1px;height:1px;background:#9a9a9a"></div>
<div class="a" style="left:117px;top:505.9px;width:1px;height:1px;background:#9a9a9a"></div>
<div class="a" style="left:115.500px;top:512.2px;width:4px;height:1px;background:#9a9a9a"></div>
<div class="a" style="left:117px;top:518.6px;width:1px;height:1px;background:#9a9a9a"></div>
<div class="a" style="left:117px;top:531.2px;width:1px;height:1px;background:#9a9a9a"></div>
<div class="a" style="left:115.500px;top:537.6px;width:4px;height:1px;background:#9a9a9a"></div>
<div class="a" style="left:117px;top:543.9px;width:1px;height:1px;background:#9a9a9a"></div>
<div class="a" style="left:117px;top:556.5px;width:1px;height:1px;background:#9a9a9a"></div>
<div class="a" style="left:115.500px;top:562.9px;width:4px;height:1px;background:#9a9a9a"></div>
<div class="a" style="left:117px;top:569.2px;width:1px;height:1px;background:#9a9a9a"></div>
<div class="a" style="left:117px;top:581.8px;width:1px;height:1px;background:#9a9a9a"></div>
<div class="a" style="left:115.500px;top:588.2px;width:4px;height:1px;background:#9a9a9a"></div>
<div class="a" style="left:117px;top:594.5px;width:1px;height:1px;background:#9a9a9a"></div>
<div class="a" style="left:117px;top:607.1px;width:1px;height:1px;background:#9a9a9a"></div>
<div class="a" style="left:115.500px;top:613.5px;width:4px;height:1px;background:#9a9a9a"></div>
<div class="a" style="left:117px;top:619.8px;width:1px;height:1px;background:#9a9a9a"></div>
<div class="a" style="left:117px;top:632.4px;width:1px;height:1px;background:#9a9a9a"></div>
<div class="a" style="left:115.500px;top:638.8px;width:4px;height:1px;background:#9a9a9a"></div>
<div class="a" style="left:117px;top:645.1px;width:1px;height:1px;background:#9a9a9a"></div>
<div class="a" style="left:117px;top:657.7px;width:1px;height:1px;background:#9a9a9a"></div>
<div class="a" style="left:115.500px;top:664.1px;width:4px;height:1px;background:#9a9a9a"></div>
<div class="a" style="left:117px;top:670.4px;width:1px;height:1px;background:#9a9a9a"></div>
<div class="a" style="left:117px;top:683.0px;width:1px;height:1px;background:#9a9a9a"></div>
<div class="a" style="left:115.500px;top:689.4px;width:4px;height:1px;background:#9a9a9a"></div>
<div class="a" style="left:117px;top:695.7px;width:1px;height:1px;background:#9a9a9a"></div>
<div class="a" style="left:117px;top:708.3px;width:1px;height:1px;background:#9a9a9a"></div>
<div class="a" style="left:115.500px;top:714.7px;width:4px;height:1px;background:#9a9a9a"></div>
<div class="a" style="left:117px;top:721.0px;width:1px;height:1px;background:#9a9a9a"></div>
<div class="a" style="left:117px;top:733.6px;width:1px;height:1px;background:#9a9a9a"></div>
<div class="a" style="left:115.500px;top:740.0px;width:4px;height:1px;background:#9a9a9a"></div>
<div class="a" style="left:117px;top:746.3px;width:1px;height:1px;background:#9a9a9a"></div>
<div class="a" style="left:117px;top:758.9px;width:1px;height:1px;background:#9a9a9a"></div>
<div class="a" style="left:115.500px;top:765.2px;width:4px;height:1px;background:#9a9a9a"></div>
<div class="a" style="left:117px;top:771.6px;width:1px;height:1px;background:#9a9a9a"></div>
<div class="a" style="left:117px;top:784.2px;width:1px;height:1px;background:#9a9a9a"></div>
<div class="a" style="left:115.500px;top:790.6px;width:4px;height:1px;background:#9a9a9a"></div>
<div class="a" style="left:117px;top:796.9px;width:1px;height:1px;background:#9a9a9a"></div>
<div class="a" id="slide" style="left:143px;top:297px;width:506px;height:506px;border:1px solid #c9c9c9;background:#fff;overflow:hidden"><div class="a" style="left:60px;top:-40px;width:360px;height:80px;border-radius:50%;background:radial-gradient(closest-side,rgba(195,238,250,.42),rgba(195,238,250,0))"></div><div class="a" style="left:36px;top:395px;width:280px;height:230px;border-radius:50%;background:radial-gradient(closest-side,rgba(195,240,250,.6),rgba(200,240,250,.2) 55%,rgba(200,240,250,0))"></div><div class="a" style="left:0;top:150px;width:50px;height:354px;background:radial-gradient(ellipse 45px 230px at 0% 65%,rgba(240,235,255,.55),rgba(240,235,255,0))"></div><div class="a" style="left:300px;top:0;width:205px;height:504px;background:radial-gradient(ellipse 200px 420px at 100% 25%,rgba(252,253,240,.65),rgba(252,253,240,0))"></div></div>
<div class="a" style="left:197px;top:326px;width:398px;height:50px;border-radius:4px;background:linear-gradient(90deg,#1ebcfb 0%,#1eb1fa 45%,#1b8cf8 100%);box-shadow:0 5px 10px rgba(0,0,0,.2)"></div>
<div class="t" style="left:334px;top:338.500px;font-size:25px;color:#eafaff;font-weight:500">自律的音律</div>
<div class="a" style="left:197px;top:385px;width:398px;height:51px;border-radius:3px;background:linear-gradient(90deg,#1ebcfb 0%,#1eb1fa 45%,#1b8cf8 100%);box-shadow:0 10px 16px rgba(0,0,0,.17);border:1px solid #8fa3ad"></div>
<div class="t" style="left:310px;top:398.500px;font-size:25px;color:#eafaff;font-weight:500">自律的音律</div>
<div class="a" style="left:395.500px;top:360px;width:1px;height:21px;background:#9a9a9a"></div>
<svg style="left:387px;top:343px" width="20" height="20" viewBox="0 0 20 20"><path d="M16.300 7A7 7 0 1 0 17 10.500" fill="none" stroke="#7d7d7d" stroke-width="5.200"/><path d="M16.300 7A7 7 0 1 0 17 10.500" fill="none" stroke="#fff" stroke-width="3.200"/><path d="M11.500 8.500h7v-6.500z" fill="#fff" stroke="#7d7d7d" stroke-width="1"/></svg>
<div class="a" style="left:191.5px;top:379.5px;width:11px;height:11px;border-radius:6px;background:#fff;border:1.500px solid #7c7c7c"></div>
<div class="a" style="left:390.5px;top:379.5px;width:11px;height:11px;border-radius:6px;background:#fff;border:1.500px solid #7c7c7c"></div>
<div class="a" style="left:589.5px;top:379.5px;width:11px;height:11px;border-radius:6px;background:#fff;border:1.500px solid #7c7c7c"></div>
<div class="a" style="left:191.5px;top:405.0px;width:11px;height:11px;border-radius:6px;background:#fff;border:1.500px solid #7c7c7c"></div>
<div class="a" style="left:589.5px;top:405.0px;width:11px;height:11px;border-radius:6px;background:#fff;border:1.500px solid #7c7c7c"></div>
<div class="a" style="left:191.5px;top:430.5px;width:11px;height:11px;border-radius:6px;background:#fff;border:1.500px solid #7c7c7c"></div>
<div class="a" style="left:390.5px;top:430.5px;width:11px;height:11px;border-radius:6px;background:#fff;border:1.500px solid #7c7c7c"></div>
<div class="a" style="left:589.5px;top:430.5px;width:11px;height:11px;border-radius:6px;background:#fff;border:1.500px solid #7c7c7c"></div>
<div class="a" style="left:198.500px;top:381.500px;width:9px;height:9px;border-radius:5px;background:#f0a22e;border:1px solid #d9932a"></div>
<div class="t" style="left:693px;top:271px;font-size:12px;font-weight:700;color:#333">形状选项</div>
<div class="t" style="left:759px;top:271px;font-size:12px;color:#444">文本选项</div>
<svg style="left:896px;top:236px" width="14" height="8" viewBox="0 0 14 8"><path d="M1 1l6 6 6-6" fill="none" stroke="#444" stroke-width="1.200"/></svg>
<svg style="left:930px;top:234px" width="11" height="11" viewBox="0 0 11 11"><path d="M.5.5l10 10M10.500.5l-10 10" stroke="#444" stroke-width="1.200"/></svg>
<svg style="left:692px;top:296px" width="27" height="25" viewBox="0 0 27 25"><path d="M2.100 14.500L12 4.300l10.300 9.500L12 23.700z" fill="#fff" stroke="#444" stroke-width="1.300" stroke-linejoin="round"/><path d="M12 11.500L11 5.500a2.300 2.300 0 1 1 2.500-1.500" fill="none" stroke="#444" stroke-width="1.100"/><circle cx="12" cy="11.500" r="1.100" fill="#444"/><path d="M16 7c4 .5 7.500 3 8.300 7 .5 2.500-.3 5.500-1.300 8-.5-3.500-1.200-6-2.700-8z" fill="#555"/></svg>
<svg style="left:734px;top:297px" width="23" height="25" viewBox="0 0 23 25"><path d="M11.300 1.400L21.700 10l-4 9.500H4.700L1.600 10z" fill="#fff" stroke="#444" stroke-width="1.300" stroke-linejoin="round"/><path d="M4.700 19.500h13" stroke="#444" stroke-width="2"/><path d="M5 20.500l-1.500 3.200M17.500 20.500l1.500 3.200" stroke="#888" stroke-width="1"/></svg>
<div class="a" style="left:770px;top:295px;width:30px;height:30px;background:#f8bfa8"></div>
<svg style="left:772px;top:298px" width="26" height="25" viewBox="0 0 26 25"><rect x="8" y="7" width="14.500" height="15" fill="#c4472a"/><path d="M8 3h14.500M8 .8v4.400M22.500.8v4.400M3.500 7v15M1.300 7h4.400M1.300 22h4.400" stroke="#c4472a" stroke-width="1.100"/><path d="M15.250 9.500v10M10.250 14.500h10M13.700 11l1.550-1.600L16.800 11M13.700 18l1.550 1.600L16.800 18M11.700 13l-1.600 1.500 1.600 1.500M18.800 13l1.600 1.500-1.600 1.500" fill="none" stroke="#ffeec8" stroke-width="1"/></svg>
<svg style="left:688px;top:331px" width="258" height="10" viewBox="0 0 258 10"><path d="M0 8.500h89.500l7.500-7 7.500 7H258" fill="none" stroke="#c6c6c6" stroke-width="1"/></svg>
<svg style="left:696px;top:349px" width="7" height="10" viewBox="0 0 7 10"><path d="M1 1l5 4-5 4z" fill="none" stroke="#777" stroke-width="1"/></svg>
<svg style="left:696px;top:376px" width="7" height="10" viewBox="0 0 7 10"><path d="M1 1l5 4-5 4z" fill="none" stroke="#777" stroke-width="1"/></svg>
<svg style="left:695px;top:404px" width="8" height="8" viewBox="0 0 8 8"><path d="M7 1v6H1z" fill="#444"/></svg>
<div class="t" style="left:710px;top:348px;font-size:12px;font-weight:700;color:#333">大小</div>
<div class="t" style="left:710px;top:375px;font-size:12px;font-weight:700;color:#333">位置</div>
<div class="t" style="left:710px;top:402px;font-size:12px;font-weight:700;color:#b7472a">文本框</div>
<div class="t" style="left:710px;top:428.5px;font-size:12px;color:#333">垂直对齐方式(<u>V</u>)</div>
<div class="t" style="left:710px;top:459px;font-size:12px;color:#333">文字方向(<u>X</u>)</div>
<div class="a" style="left:826px;top:423px;width:99px;height:22px;background:#fff;border:1px solid #ababab"></div>
<div class="t" style="left:832px;top:428px;font-size:12px;color:#333">中部对齐</div>
<div class="a" style="left:912px;top:432px;width:0;height:0;border-left:4px solid transparent;border-right:4px solid transparent;border-top:5px solid #555"></div>
<div class="a" style="left:826px;top:453px;width:99px;height:22px;background:#fff;border:1px solid #ababab"></div>
<div class="t" style="left:832px;top:458px;font-size:12px;color:#333">横排</div>
<div class="a" style="left:912px;top:462px;width:0;height:0;border-left:4px solid transparent;border-right:4px solid transparent;border-top:5px solid #555"></div>
<div class="a" style="left:711px;top:494px;width:12px;height:12px;border-radius:6px;border:1px solid #9a9a9a;background:#fff"></div>
<div class="a" style="left:714px;top:497px;width:6px;height:6px;border-radius:3px;background:#666"></div>
<div class="t" style="left:728px;top:494px;font-size:12px;color:#333">不自动调整(<u>D</u>)</div>
<div class="a" style="left:711px;top:519px;width:12px;height:12px;border-radius:6px;border:1px solid #9a9a9a;background:#fff"></div>
<div class="t" style="left:728px;top:519px;font-size:12px;color:#333">溢出时缩排文字(<u>S</u>)</div>
<div class="a" style="left:711px;top:543.5px;width:12px;height:12px;border-radius:6px;border:1px solid #9a9a9a;background:#fff"></div>
<div class="t" style="left:728px;top:543.5px;font-size:12px;color:#333">根据文字调整形状大小(<u>F</u>)</div>
<div class="t" style="left:710px;top:572.5px;font-size:12px;color:#333">左边距(<u>L</u>)</div>
<div class="a" style="left:822px;top:566px;width:103px;height:26px;background:#fff;border:1px solid #ababab"></div>
<div class="t" style="left:829px;top:573px;font-size:12px;color:#333">0.25 厘米</div>
<svg style="left:913px;top:571.5px" width="6" height="4" viewBox="0 0 8 5"><path d="M1 4l3-3 3 3" fill="none" stroke="#555" stroke-width="1.100"/></svg>
<svg style="left:913px;top:583px" width="6" height="4" viewBox="0 0 8 5"><path d="M1 1l3 3 3-3" fill="none" stroke="#555" stroke-width="1.100"/></svg>
<div class="t" style="left:710px;top:604.5px;font-size:12px;color:#333">右边距(<u>R</u>)</div>
<div class="a" style="left:822px;top:598px;width:103px;height:26px;background:#fff;border:1px solid #ababab"></div>
<div class="t" style="left:829px;top:605px;font-size:12px;color:#333">0.25 厘米</div>
<svg style="left:913px;top:603.5px" width="6" height="4" viewBox="0 0 8 5"><path d="M1 4l3-3 3 3" fill="none" stroke="#555" stroke-width="1.100"/></svg>
<svg style="left:913px;top:615px" width="6" height="4" viewBox="0 0 8 5"><path d="M1 1l3 3 3-3" fill="none" stroke="#555" stroke-width="1.100"/></svg>
<div class="t" style="left:710px;top:636.5px;font-size:12px;color:#333">上边距(<u>T</u>)</div>
<div class="a" style="left:822px;top:630px;width:103px;height:26px;background:#fff;border:1px solid #ababab"></div>
<div class="t" style="left:829px;top:637px;font-size:12px;color:#333">0.13 厘米</div>
<svg style="left:913px;top:635.5px" width="6" height="4" viewBox="0 0 8 5"><path d="M1 4l3-3 3 3" fill="none" stroke="#555" stroke-width="1.100"/></svg>
<svg style="left:913px;top:647px" width="6" height="4" viewBox="0 0 8 5"><path d="M1 1l3 3 3-3" fill="none" stroke="#555" stroke-width="1.100"/></svg>
<div class="t" style="left:710px;top:668.5px;font-size:12px;color:#333">下边距(<u>B</u>)</div>
<div class="a" style="left:822px;top:662px;width:103px;height:26px;background:#fff;border:1px solid #ababab"></div>
<div class="t" style="left:829px;top:669px;font-size:12px;color:#333">0.13 厘米</div>
<svg style="left:913px;top:667.5px" width="6" height="4" viewBox="0 0 8 5"><path d="M1 4l3-3 3 3" fill="none" stroke="#555" stroke-width="1.100"/></svg>
<svg style="left:913px;top:679px" width="6" height="4" viewBox="0 0 8 5"><path d="M1 1l3 3 3-3" fill="none" stroke="#555" stroke-width="1.100"/></svg>
<div class="a" style="left:680px;top:603px;width:20px;height:20px;border-radius:10px;background:#d2552e"></div>
<div class="t" style="left:686.500px;top:607.500px;font-size:11px;color:#fff">2</div>
<div class="a" style="left:710px;top:697px;width:12px;height:12px;border:1px solid #8a8a8a;background:#fff"></div>
<svg style="left:712px;top:699px" width="9" height="8" viewBox="0 0 9 8"><path d="M.8 4l2.400 2.800L8 .8" fill="none" stroke="#555" stroke-width="1.100"/></svg>
<div class="t" style="left:728px;top:696.5px;font-size:12px;color:#333">形状中的文字自动换行(<u>W</u>)</div>
<div class="a" style="left:710px;top:721px;width:67px;height:25px;background:#fdfdfd;border:1px solid #adadad"></div>
<div class="t" style="left:719px;top:727.500px;font-size:12px;color:#333">分栏(<u>C</u>)...</div>
<!-- paragraph popup -->
<div class="a" style="left:528px;top:179px;width:334px;height:96px;background:#fff;border:1px solid #d6d6d6;box-shadow:0 2px 6px rgba(0,0,0,.22)"></div>
<!-- row1 -->
<svg style="left:540px;top:193px" width="16" height="15" viewBox="0 0 16 15"><rect x="0" y="0" width="3" height="3" fill="#2a7f9e"/><rect x="0" y="6" width="3" height="3" fill="#2b7ab8"/><rect x="0" y="12" width="3" height="3" fill="#2a7f9e"/><path d="M5.500 1.500H16M5.500 7.500H16M5.500 13.500H16" stroke="#444" stroke-width="1.200"/></svg>
<svg style="left:562px;top:198px" width="8" height="5" viewBox="0 0 8 5"><path d="M1 1l3 3 3-3" fill="none" stroke="#3b3b3b" stroke-width="1.200"/></svg>
<svg style="left:581px;top:192px" width="17" height="17" viewBox="0 0 17 17"><path d="M6.500 2.500H17M6.500 8.500H17M6.500 14.500H17" stroke="#444" stroke-width="1.200"/><text x="0" y="5" font-size="5.500" fill="#2a7f9e" font-family="Liberation Sans, sans-serif" font-weight="700">1</text><text x="0" y="11" font-size="5.500" fill="#2a7f9e" font-family="Liberation Sans, sans-serif" font-weight="700">2</text><text x="0" y="17" font-size="5.500" fill="#2a7f9e" font-family="Liberation Sans, sans-serif" font-weight="700">3</text></svg>
<svg style="left:603px;top:198px" width="8" height="5" viewBox="0 0 8 5"><path d="M1 1l3 3 3-3" fill="none" stroke="#3b3b3b" stroke-width="1.200"/></svg>
<div class="a" style="left:617px;top:189px;width:1px;height:22px;background:#dcdcdc"></div>
<svg style="left:626px;top:194px" width="15" height="13" viewBox="0 0 15 13"><path d="M0 .6h15M7.500 4.500h7.500M7.500 8.500h7.500M0 12.400h15" stroke="#b5b5b5" stroke-width="1.100"/><path d="M5 6.500H.5M2.500 4.300L.5 6.500l2 2.200" fill="none" stroke="#b5b5b5" stroke-width="1.100"/></svg>
<svg style="left:652px;top:194px" width="15" height="13" viewBox="0 0 15 13"><path d="M0 .6h15M7.500 4.500h7.500M7.500 8.500h7.500M0 12.400h15" stroke="#b5b5b5" stroke-width="1.100"/><path d="M0 6.500h4.500M2.500 4.300l2 2.200-2 2.200" fill="none" stroke="#b5b5b5" stroke-width="1.100"/></svg>
<div class="a" style="left:673px;top:189px;width:1px;height:22px;background:#dcdcdc"></div>
<svg style="left:680px;top:192px" width="17" height="17" viewBox="0 0 17 17"><path d="M6.500 2.500H17M6.500 8.500H17M6.500 14.500H17" stroke="#444" stroke-width="1.200"/><path d="M2.500 1v15M.5 3.200L2.500 1l2 2.200M.5 13.800l2 2.200 2-2.200" fill="none" stroke="#2a7f9e" stroke-width="1.100"/></svg>
<svg style="left:701px;top:198px" width="8" height="5" viewBox="0 0 8 5"><path d="M1 1l3 3 3-3" fill="none" stroke="#3b3b3b" stroke-width="1.200"/></svg>
<!-- right column -->
<svg style="left:722px;top:184px" width="17" height="17" viewBox="0 0 17 17"><path d="M3.500 1v14.500M1.300 13L3.500 15.500 5.700 13" fill="none" stroke="#444" stroke-width="1.100"/><path d="M11.500 9.500v6M9.300 13l2.200 2.500 2.200-2.500" fill="none" stroke="#444" stroke-width="1.100"/><path d="M8.700 7.500L11.500 1l2.800 6.500M9.700 5.300h3.600" fill="none" stroke="#2b7ab8" stroke-width="1.100"/></svg>
<div class="t" style="left:742px;top:185.500px;font-size:12px;color:#222">文字方向</div>
<svg style="left:793px;top:190px" width="8" height="5" viewBox="0 0 8 5"><path d="M1 1l3 3 3-3" fill="none" stroke="#3b3b3b" stroke-width="1.200"/></svg>
<svg style="left:722px;top:209px" width="17" height="18" viewBox="0 0 17 18"><path d="M3.500 3H1v12h2.500M13.500 3H16v12h-2.500" fill="none" stroke="#444" stroke-width="1.100"/><path d="M8.500 1v16M6.300 3.200L8.500 1l2.200 2.200M6.300 14.800l2.200 2.200 2.200-2.200" fill="none" stroke="#2f8a8a" stroke-width="1.100"/><path d="M4.500 9h2.500M10 9h2.500" stroke="#2f8a8a" stroke-width="1.100"/></svg>
<div class="t" style="left:742px;top:212.500px;font-size:12px;color:#222">对齐文本</div>
<svg style="left:793px;top:216px" width="8" height="5" viewBox="0 0 8 5"><path d="M1 1l3 3 3-3" fill="none" stroke="#3b3b3b" stroke-width="1.200"/></svg>
<svg style="left:721px;top:236px" width="18" height="15" viewBox="0 0 18 15"><path d="M.5 1h8.500l3.500 3.500L9 8H.5l3-3.500z" fill="#8ccf8c" stroke="#3e9a4e" stroke-width=".9" stroke-linejoin="round"/><rect x="6.500" y="5.500" width="10.500" height="8.500" fill="#fff" stroke="#444" stroke-width="1.100"/><path d="M8.500 8.500h1M11 8.500h4M8.500 11h1M11 11h4" stroke="#444" stroke-width="1"/></svg>
<div class="t" style="left:742px;top:237.500px;font-size:12px;color:#222;letter-spacing:.2px">转换为 SmartArt</div>
<svg style="left:836px;top:241.500px" width="8" height="5" viewBox="0 0 8 5"><path d="M1 1l3 3 3-3" fill="none" stroke="#3b3b3b" stroke-width="1.200"/></svg>
<!-- row2 -->
<svg style="left:541px;top:226px" width="14" height="12" viewBox="0 0 14 12"><path d="M0 .6h14M0 4.200h9M0 7.800h14M0 11.400h9" stroke="#444" stroke-width="1.100"/></svg>
<div class="a" style="left:562px;top:220px;width:24px;height:24px;background:#f6bca9;border:1px solid #e0866a;border-radius:3px"></div>
<svg style="left:567px;top:226px" width="14" height="12" viewBox="0 0 14 12"><path d="M0 .6h14M2.500 4.200h9M0 7.800h14M2.500 11.400h9" stroke="#444" stroke-width="1.100"/></svg>
<svg style="left:593px;top:226px" width="14" height="12" viewBox="0 0 14 12"><path d="M0 .6h14M5 4.200h9M0 7.800h14M5 11.400h9" stroke="#444" stroke-width="1.100"/></svg>
<svg style="left:619px;top:226px" width="14" height="12" viewBox="0 0 14 12"><path d="M0 .6h14M0 4.200h14M0 7.800h14M0 11.400h14" stroke="#444" stroke-width="1.100"/></svg>
<svg style="left:644px;top:223px" width="16" height="17" viewBox="0 0 16 17"><path d="M.7 0v17M15.300 0v17" stroke="#2f8a9a" stroke-width="1.300"/><path d="M2.500 7.400h11M2.500 11.400h11M2.500 15.300h11" stroke="#444" stroke-width="1.100"/><path d="M3 3.500h10M5 1.500L3 3.500l2 2M11 1.500l2 2-2 2" fill="none" stroke="#2f8a9a" stroke-width="1.100"/></svg>
<div class="a" style="left:667px;top:221px;width:1px;height:22px;background:#dcdcdc"></div>
<svg style="left:675px;top:228px" width="12" height="8" viewBox="0 0 12 8"><path d="M0 .7h5M0 3.800h5M0 6.900h5M7 .7h5M7 3.800h5M7 6.900h5" stroke="#2f8a9a" stroke-width="1.100"/></svg>
<svg style="left:693px;top:230px" width="8" height="5" viewBox="0 0 8 5"><path d="M1 1l3 3 3-3" fill="none" stroke="#3b3b3b" stroke-width="1.200"/></svg>
<div class="t" style="left:676px;top:260px;font-size:12px;color:#333">段落</div>
<svg style="left:850px;top:264px" width="9" height="9" viewBox="0 0 9 9"><path d="M.5 6V.5H6M3.500 3.500L8 8M8 4.500V8H4.500" fill="none" stroke="#444" stroke-width="1"/></svg>

<!-- status bar -->
<div class="t" style="left:9.500px;top:868px;font-size:12px;color:#333;word-spacing:.7px">幻灯片 第 1 张，共 1 张</div>
<div class="t" style="left:158px;top:868px;font-size:12px;color:#333;letter-spacing:.35px">“公众号：自律的音律”</div>
<svg style="left:295px;top:868px" width="15" height="13" viewBox="0 0 15 13"><path d="M7.500 2.500C6 1 3.500 1 1 1.500v9.500c2.500-.5 5-.5 6.500 1 1.500-1.500 4-1.500 6.500-1V1.500C11.500 1 9 1 7.500 2.500zM7.500 2.500V12" fill="none" stroke="#444" stroke-width="1"/></svg>
<svg style="left:518px;top:867px" width="16" height="14" viewBox="0 0 16 14"><path d="M0 8.500h16M0 12.500h16" stroke="#444" stroke-width="1.100"/><path d="M4.500 5L8 1.500 11.500 5" fill="none" stroke="#444" stroke-width="1.100"/></svg>
<div class="t" style="left:535px;top:868px;font-size:12px;color:#333">备注</div>
<div class="a" style="left:579px;top:864px;width:40px;height:21px;background:#d9d9d9"></div>
<svg style="left:591px;top:868px" width="16" height="13" viewBox="0 0 16 13"><rect x=".6" y=".6" width="14.800" height="11.800" fill="none" stroke="#333" stroke-width="1.100"/><rect x="4" y="3.500" width="8" height="5.500" fill="none" stroke="#333" stroke-width="1"/><path d="M.6 3.500h2" stroke="#333" stroke-width="1"/></svg>
<svg style="left:632px;top:868px" width="14" height="13" viewBox="0 0 14 13"><rect x=".6" y=".6" width="5" height="4.500" fill="none" stroke="#333" stroke-width="1.100"/><rect x="8.400" y=".6" width="5" height="4.500" fill="none" stroke="#333" stroke-width="1.100"/><rect x=".6" y="7.900" width="5" height="4.500" fill="none" stroke="#333" stroke-width="1.100"/><rect x="8.400" y="7.900" width="5" height="4.500" fill="none" stroke="#333" stroke-width="1.100"/></svg>
<svg style="left:672px;top:868px" width="14" height="13" viewBox="0 0 14 13"><path d="M7 1.500C5.500.5 3 .5 1 1v10.500c2-.5 4.500-.5 6 .5 1.500-1 4-1 6-.5V1C11 .5 8.500.5 7 1.500zM7 1.500V12" fill="none" stroke="#333" stroke-width="1"/><path d="M2.500 3.500h3M2.500 5.500h3M2.500 7.500h3M8.500 3.500h3M8.500 5.500h3M8.500 7.500h3" stroke="#333" stroke-width=".8"/></svg>
<svg style="left:712px;top:867px" width="14" height="14" viewBox="0 0 14 14"><path d="M0 1h14" stroke="#333" stroke-width="1.200"/><path d="M1.500 1v6.500h11V1M7 7.500V11M3.500 13.500h7" fill="none" stroke="#333" stroke-width="1.100"/></svg>
<div class="a" style="left:745px;top:874px;width:8px;height:1px;background:#333"></div>
<div class="a" style="left:758px;top:874px;width:100px;height:1px;background:#777"></div>
<div class="a" style="left:789px;top:868px;width:4px;height:13px;background:#666"></div>
<div class="a" style="left:808px;top:871px;width:1px;height:7px;background:#666"></div>
<div class="a" style="left:863px;top:874px;width:9px;height:1px;background:#333"></div>
<div class="a" style="left:867px;top:870px;width:1px;height:9px;background:#333"></div>
<div class="t" style="left:884px;top:868px;font-size:12px;color:#333">67%</div>
<svg style="left:927px;top:866px" width="16" height="16" viewBox="0 0 16 16"><rect x="4.500" y="5" width="7" height="6" fill="none" stroke="#333" stroke-width="1.100"/><path d="M6 2.500L8 .8l2 1.700M6 13.500l2 1.700 2-1.700M2.500 6L.8 8l1.700 2M13.500 6l1.700 2-1.700 2" fill="none" stroke="#333" stroke-width="1"/></svg>

</div>
</body>
</html>
